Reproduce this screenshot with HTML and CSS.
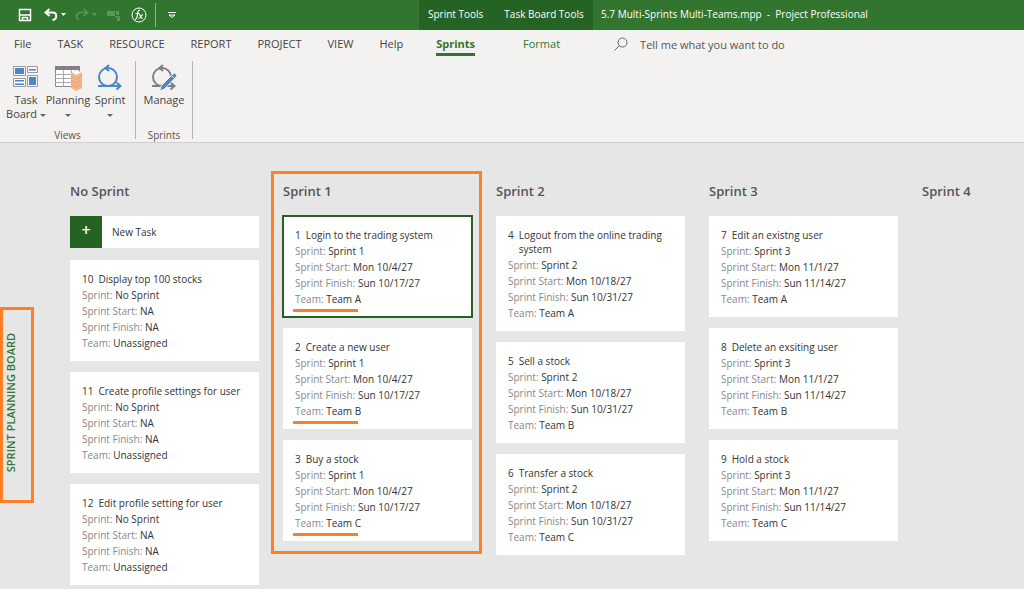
FILE: index.html
```html
<!DOCTYPE html>
<html lang="en">
<head>
    <meta charset="UTF-8">
    <meta name="viewport" content="width=device-width, initial-scale=1.0">
    <title>5.7 Multi-Sprints Multi-Teams.mpp - Project Professional</title>
    <link rel="stylesheet" href="styles.css">
</head>
<body>

<!-- Title bar -->
<header class="titlebar">
    <div class="quick-access">
        <button type="button" aria-label="Save">
            <svg width="14" height="14" viewBox="0 0 14 14" fill="none" stroke="#fff" stroke-width="1.5"><path d="M1.5 1.5h11v11h-11z"/><path d="M2 7h10M4.500 12.500v-3h5v3"/></svg>
        </button>
        <button type="button" aria-label="Undo" class="undo">
            <svg width="22" height="14" viewBox="0 0 22 14" fill="none"><path d="M5.5 1 1.5 4.500 5.500 8M2 4.500h6.500c5 0 5 6.500 0 7.500" stroke="#fff" stroke-width="2"/><path d="M17 5h5l-2.500 3z" fill="#fff"/></svg>
        </button>
        <button type="button" aria-label="Redo" class="redo" disabled>
            <svg width="22" height="14" viewBox="0 0 22 14" fill="none"><path d="M8.500 1l4 3.500-4 3.500M12 4.500H6c-5 0-6 5.500-2 7.500" stroke="#5f955d" stroke-width="1.500"/><path d="M17 5h5l-2.500 3z" fill="#5f955d"/></svg>
        </button>
        <button type="button" aria-label="Assign resources" class="assign" disabled>
            <svg width="14" height="12" viewBox="0 0 14 12" fill="#5f955d"><path d="M0 2h8v5H0zM9 2h3v4H9zM8 7h5v1.500H8zM10 9h3v3h-3z"/></svg>
        </button>
        <button type="button" aria-label="Formula" class="formula">
            <svg width="16" height="16" viewBox="0 0 16 16" fill="none" stroke="#fff"><circle cx="8" cy="8" r="7"/><path d="M9 3.500c-2-.5-2 1-2.500 4S5.500 12.500 4 12M4.500 6.500h4M8 7.500c1.500 0 1.500 4 3.500 4M12 7.500c-1.500 0-2.500 4-4.500 4" stroke-width="1.200"/></svg>
        </button>
        <span class="divider"></span>
        <button type="button" aria-label="Customize toolbar">
            <svg width="8" height="8" viewBox="0 0 8 8" fill="none" stroke="#fff"><path d="M0 1.500h8M1 4l3 2.500L7 4z"/></svg>
        </button>
    </div>
    <div class="context-tools">
        <span>Sprint Tools</span>
        <span>Task Board Tools</span>
    </div>
    <div class="window-title">5.7 Multi-Sprints Multi-Teams.mpp &nbsp;-&nbsp; Project Professional</div>
</header>

<!-- Tabs -->
<nav class="tabs">
    <a href="#">File</a>
    <a href="#">TASK</a>
    <a href="#">RESOURCE</a>
    <a href="#">REPORT</a>
    <a href="#">PROJECT</a>
    <a href="#">VIEW</a>
    <a href="#">Help</a>
    <a href="#" class="context active">Sprints</a>
    <a href="#" class="context format">Format</a>
    <label class="search">
        <svg width="14" height="14" viewBox="0 0 14 14" fill="none" stroke="#666"><circle cx="8.500" cy="5.500" r="4.500"/><path d="M5.300 8.700.5 13.500"/></svg>
        <input type="text" placeholder="Tell me what you want to do" aria-label="Tell me what you want to do">
    </label>
</nav>

<!-- Ribbon -->
<section class="ribbon">
    <div class="group views">
        <div class="group-buttons">
            <button type="button">
                <svg width="26" height="26" viewBox="0 0 26 26" fill="#f8f8f8" stroke="#999"><path d="M.5 1.500h12v9H.5zM14.500 1.500h10v6h-10zM.5 13.500h12v8H.5zM14.500 10.500h10v11h-10z"/><path d="M2 3h9v6H2zM16 4h7v1.500h-7zM2 15h9v1.500H2zM2 18.500h9V20H2zM16 12h7v8h-7z" fill="#4a86c8" stroke="none"/></svg>
                <span>Task</span>
                <span>Board <i class="caret"></i></span>
            </button>
            <button type="button">
                <svg width="26" height="26" viewBox="0 0 26 26"><path d="M.5 1.500h24v20H.5z" fill="#fff" stroke="#888"/><path d="M0 1h25v4H0z" fill="#808080"/><path d="M0 9.500h25M0 13.500h25M0 17.500h25M8.500 5v17M16.500 5v17" stroke="#aaa"/><path d="M16 8 21.500 4.500 27 8v15l-5.500 3-5.500-3z" fill="#f2b58b"/><path d="M17 7.500 21.500 5 26 7.500 21.500 10z" fill="#fff"/><path d="M16 11l5.500 3.500L27 11M16 15l5.500 3.500L27 15M16 19l5.500 3.500L27 19" fill="none" stroke="#ee9558" stroke-dasharray="2 1"/></svg>
                <span>Planning</span>
                <span><i class="caret"></i></span>
            </button>
            <button type="button">
                <svg width="26" height="26" viewBox="0 0 26 26" fill="none" stroke="#4a86c8" stroke-width="2"><circle cx="11" cy="12" r="9"/><path d="M12 0 8.500 3 12 6M1 21h22.500M19.500 17.500l4 3.500-4 3.500"/></svg>
                <span>Sprint</span>
                <span><i class="caret"></i></span>
            </button>
        </div>
        <div class="group-name">Views</div>
    </div>
    <div class="group">
        <div class="group-buttons">
            <button type="button">
                <svg width="26" height="26" viewBox="0 0 26 26" fill="none" stroke="#808080" stroke-width="2"><circle cx="11" cy="12" r="9"/><path d="M12 0 8.500 3 12 6M1 21h22.500M19.500 17.500l4 3.500-4 3.500"/><path d="M8.500 26l2-5.500L22 9q1.500-1.500 3 0t0 3L13.500 24z" fill="#4a86c8" stroke="#f3f2f1" stroke-width="1"/><path d="M20.500 10.500l3 3" stroke="#f3f2f1" stroke-width="1"/></svg>
                <span>Manage</span>
            </button>
        </div>
        <div class="group-name">Sprints</div>
    </div>
</section>

<!-- Board -->
<main class="board">
    <aside class="side-label"><span>SPRINT PLANNING BOARD</span></aside>

    <section class="column">
        <h2>No Sprint</h2>
        <button type="button" class="new-task"><span class="plus">+</span>New Task</button>
        <article class="card">
            <h3><span>10</span>Display top 100 stocks</h3>
            <p>Sprint: <b>No Sprint</b></p>
            <p>Sprint Start: <b>NA</b></p>
            <p>Sprint Finish: <b>NA</b></p>
            <p>Team: <b>Unassigned</b></p>
        </article>
        <article class="card">
            <h3><span>11</span>Create profile settings for user</h3>
            <p>Sprint: <b>No Sprint</b></p>
            <p>Sprint Start: <b>NA</b></p>
            <p>Sprint Finish: <b>NA</b></p>
            <p>Team: <b>Unassigned</b></p>
        </article>
        <article class="card">
            <h3><span>12</span>Edit profile setting for user</h3>
            <p>Sprint: <b>No Sprint</b></p>
            <p>Sprint Start: <b>NA</b></p>
            <p>Sprint Finish: <b>NA</b></p>
            <p>Team: <b>Unassigned</b></p>
        </article>
    </section>

    <section class="column highlighted">
        <h2>Sprint 1</h2>
        <article class="card selected">
            <h3><span>1</span>Login to the trading system</h3>
            <p>Sprint: <b>Sprint 1</b></p>
            <p>Sprint Start: <b>Mon 10/4/27</b></p>
            <p>Sprint Finish: <b>Sun 10/17/27</b></p>
            <p class="marked">Team: <b>Team A</b></p>
        </article>
        <article class="card">
            <h3><span>2</span>Create a new user</h3>
            <p>Sprint: <b>Sprint 1</b></p>
            <p>Sprint Start: <b>Mon 10/4/27</b></p>
            <p>Sprint Finish: <b>Sun 10/17/27</b></p>
            <p class="marked">Team: <b>Team B</b></p>
        </article>
        <article class="card">
            <h3><span>3</span>Buy a stock</h3>
            <p>Sprint: <b>Sprint 1</b></p>
            <p>Sprint Start: <b>Mon 10/4/27</b></p>
            <p>Sprint Finish: <b>Sun 10/17/27</b></p>
            <p class="marked">Team: <b>Team C</b></p>
        </article>
    </section>

    <section class="column">
        <h2>Sprint 2</h2>
        <article class="card">
            <h3><span>4</span>Logout from the online trading system</h3>
            <p>Sprint: <b>Sprint 2</b></p>
            <p>Sprint Start: <b>Mon 10/18/27</b></p>
            <p>Sprint Finish: <b>Sun 10/31/27</b></p>
            <p>Team: <b>Team A</b></p>
        </article>
        <article class="card">
            <h3><span>5</span>Sell a stock</h3>
            <p>Sprint: <b>Sprint 2</b></p>
            <p>Sprint Start: <b>Mon 10/18/27</b></p>
            <p>Sprint Finish: <b>Sun 10/31/27</b></p>
            <p>Team: <b>Team B</b></p>
        </article>
        <article class="card">
            <h3><span>6</span>Transfer a stock</h3>
            <p>Sprint: <b>Sprint 2</b></p>
            <p>Sprint Start: <b>Mon 10/18/27</b></p>
            <p>Sprint Finish: <b>Sun 10/31/27</b></p>
            <p>Team: <b>Team C</b></p>
        </article>
    </section>

    <section class="column">
        <h2>Sprint 3</h2>
        <article class="card">
            <h3><span>7</span>Edit an existng user</h3>
            <p>Sprint: <b>Sprint 3</b></p>
            <p>Sprint Start: <b>Mon 11/1/27</b></p>
            <p>Sprint Finish: <b>Sun 11/14/27</b></p>
            <p>Team: <b>Team A</b></p>
        </article>
        <article class="card">
            <h3><span>8</span>Delete an exsiting user</h3>
            <p>Sprint: <b>Sprint 3</b></p>
            <p>Sprint Start: <b>Mon 11/1/27</b></p>
            <p>Sprint Finish: <b>Sun 11/14/27</b></p>
            <p>Team: <b>Team B</b></p>
        </article>
        <article class="card">
            <h3><span>9</span>Hold a stock</h3>
            <p>Sprint: <b>Sprint 3</b></p>
            <p>Sprint Start: <b>Mon 11/1/27</b></p>
            <p>Sprint Finish: <b>Sun 11/14/27</b></p>
            <p>Team: <b>Team C</b></p>
        </article>
    </section>

    <section class="column">
        <h2>Sprint 4</h2>
    </section>
</main>

</body>
</html>
```

FILE: styles.css
```css
* {
    box-sizing: border-box;
}

body {
    margin: 0;
    min-height: 100vh;
    display: flex;
    flex-direction: column;
    background-color: #e6e6e6;
    color: #444;
    font-family: "Open Sans", "Noto Sans", sans-serif;
    font-size: 11px;
}

button {
    border: 0;
    padding: 0;
    background: none;
    color: inherit;
    font: inherit;
    cursor: pointer;
}

svg {
    display: block;
    overflow: visible;
}

/* title bar */
.titlebar {
    display: flex;
    height: 30px;
    background-color: #31752f;
    color: #fff;
    font-size: 10px;
}

.quick-access {
    display: flex;
    align-items: center;
    width: 419px;
    padding-left: 18px;
    flex-shrink: 0;
}

.undo {
    margin-left: 12px;
}

.redo {
    margin-left: 9px;
}

.assign {
    margin-left: 10px;
}

.formula {
    margin-left: 10px;
}

.divider {
    width: 1px;
    height: 24px;
    margin: 0 12px 0 8px;
    background-color: #8fb58e;
}

.context-tools {
    display: flex;
    align-items: center;
    gap: 21px;
    width: 174px;
    padding: 0 0 2px 9px;
    background-color: #256325;
    white-space: nowrap;
    flex-shrink: 0;
}

.window-title {
    padding-left: 8px;
    line-height: 28px;
    white-space: nowrap;
}

/* tabs */
.tabs {
    display: flex;
    align-items: center;
    height: 28px;
    padding-left: 14px;
    background-color: #f3f2f1;
}

.tabs a {
    margin-right: 26px;
    line-height: 20px;
    color: #444;
    text-decoration: none;
}

.tabs .context {
    color: #31752f;
}

.tabs .active {
    margin: 0 48px 0 7px;
    padding-top: 2px;
    line-height: 19px;
    border-bottom: 3px solid #31752f;
    font-weight: 700;
}

.search {
    display: flex;
    align-items: center;
    gap: 12px;
    margin-left: 28px;
}

.search input {
    width: 200px;
    border: 0;
    padding: 0;
    background: none;
    font: inherit;
    outline: none;
}

.search input::placeholder {
    color: #555;
    opacity: 1;
}

/* ribbon */
.ribbon {
    display: flex;
    height: 85px;
    padding-top: 3px;
    background-color: #f3f2f1;
    border-bottom: 1px solid #d2d0ce;
}

.group {
    display: flex;
    flex-direction: column;
    width: 57px;
    height: 78px;
    border-right: 1px solid #b5b5b5;
    text-align: center;
}

.views {
    width: 136px;
}

.group-buttons {
    display: flex;
    justify-content: center;
    flex: 1;
    padding-top: 4px;
}

.views .group-buttons {
    justify-content: flex-start;
    padding-left: 5px;
}

.group-buttons button {
    display: flex;
    flex-direction: column;
    align-items: center;
    width: 42px;
    line-height: 14px;
    white-space: nowrap;
}

.group-buttons svg {
    margin-bottom: 2px;
}

.caret {
    display: inline-block;
    border: 3px solid transparent;
    border-top-color: #666;
    border-bottom: 0;
    vertical-align: middle;
}

.group-name {
    font-size: 10px;
    line-height: 8px;
    color: #555;
}

/* board */
.board {
    display: flex;
    align-items: flex-start;
    gap: 24px;
    flex: 1;
    overflow: hidden;
}

.side-label {
    display: flex;
    align-items: center;
    width: 34px;
    height: 196px;
    margin: 164px 12px 0 0;
    padding: 0 8px 4px 0;
    border: 3px solid #ff7f27;
    flex-shrink: 0;
}

.side-label span {
    flex: 1;
    writing-mode: vertical-rl;
    transform: rotate(180deg);
    text-align: center;
    font-weight: 600;
    line-height: 16px;
    color: #31752f;
    white-space: nowrap;
}

.column {
    position: relative;
    display: flex;
    flex-direction: column;
    gap: 11px;
    width: 189px;
    padding-top: 38px;
    flex-shrink: 0;
}

.column h2 {
    margin: 0 0 4px;
    font-size: 13px;
    font-weight: 600;
    line-height: 20px;
    color: #555;
}

.new-task {
    display: flex;
    align-items: center;
    gap: 10px;
    height: 32px;
    margin-bottom: 1px;
    background-color: #fff;
    color: #333;
    font-size: 10px;
}

.plus {
    width: 32px;
    height: 32px;
    background-color: #256325;
    color: #fff;
    font-size: 16px;
    font-weight: 600;
    line-height: 29px;
}

.card {
    padding: 12px 12px 10px;
    background-color: #fff;
    font-size: 10px;
}

.card h3 {
    display: flex;
    gap: 5px;
    margin: 0 0 1px;
    font-size: 10px;
    font-weight: 400;
    line-height: 14px;
    color: #333;
}

.card p {
    margin: 0;
    line-height: 16px;
    color: #888;
}

.card b {
    font-weight: 500;
    color: #333;
}

.selected {
    outline: 2px solid #256325;
    outline-offset: -1px;
}

/* orange marks */
.highlighted::after {
    content: "";
    position: absolute;
    inset: 28px -10px -13px -12px;
    border: 3px solid #ff7f27;
    pointer-events: none;
}

.marked {
    position: relative;
}

.marked::after {
    content: "";
    position: absolute;
    left: -2px;
    bottom: -5px;
    width: 65px;
    height: 3px;
    background-color: #ff7f27;
}
```
